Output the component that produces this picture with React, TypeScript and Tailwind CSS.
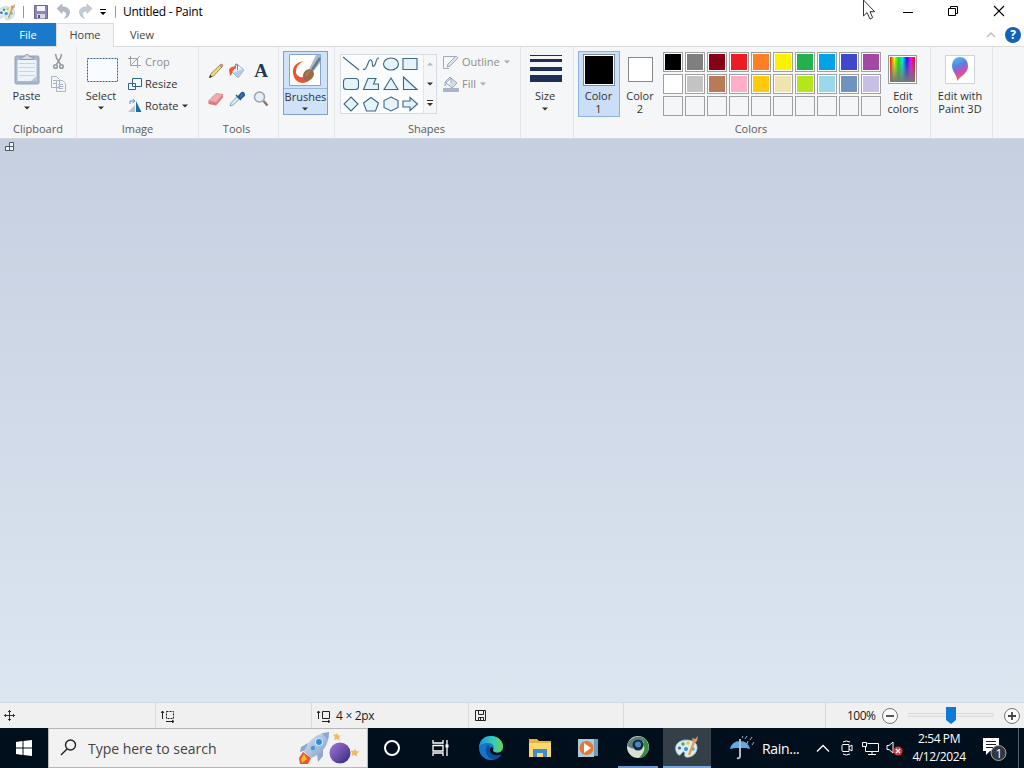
import type { ReactNode } from "react";
import clsx from "clsx";

const paletteRows = [
  ["#000000", "#7f7f7f", "#880015", "#ed1c24", "#ff7f27", "#fff200", "#22b14c", "#00a2e8", "#3f48cc", "#a349a4"],
  ["#ffffff", "#c3c3c3", "#b97a57", "#ffaec9", "#ffc90e", "#efe4b0", "#b5e61d", "#99d9ea", "#7092be", "#c8bfe7"],
  ["", "", "", "", "", "", "", "", "", ""],
];

const shapes = [
  "M2 3 18 16",
  "M2 15C6 18 7 4 10 6S10 14 13 12 14 4 18 4",
  "M2.500 10a7.500 6 0 1 0 15 0a7.500 6 0 1 0-15 0",
  "M3 4.500H17V15.500H3Z",
  "M5.500 4.500H14.500Q17.500 4.500 17.500 7.500V12.500Q17.500 15.500 14.500 15.500H5.500Q2.500 15.500 2.500 12.500V7.500Q2.500 4.500 5.500 4.500Z",
  "M7 4.500H15L12.500 10H17.500V15.500H2.500Z",
  "M10 4 17 15.500H3Z",
  "M3.500 3 17 15.500H3.500Z",
  "M10 3 17 10 10 17 3 10Z",
  "M10 3.500 17.500 9 14.500 17H5.500L2.500 9Z",
  "M10 3 17 6.500V13.500L10 17 3 13.500V6.500Z",
  "M3 7H10V3.500L17.500 10 10 16.500V13H3Z",
];

function Arrow({ className }: { className?: string }) {
  return (
    <svg width="6" height="4" viewBox="0 0 6 4" className={clsx("shrink-0", className)}>
      <path d="M0 .5H6L3 3.500Z" fill="currentColor" />
    </svg>
  );
}

function Group({ label, className, children }: { label?: string; className: string; children: ReactNode }) {
  return (
    <div className={clsx("flex h-[91px] shrink-0 flex-col border-r border-[#e2e5ea]", className)}>
      <div className="flex h-[75px] items-start">{children}</div>
      <div className="h-[14px] text-center leading-[14px] text-[#5a5a5a]">{label}</div>
    </div>
  );
}

function PaletteIcon({ size }: { size: number }) {
  return (
    <svg width={size} height={size} viewBox="0 0 24 24" className="shrink-0">
      <path d="M1 16C-1 10 4 5 11 5s12 3 11 9-7 9-11 8c-3-1 0-4-2-5s-3 4-5 3-2-2-3-4Z" fill="#dcebf2" stroke="#9fc0d0" strokeWidth=".8" />
      <circle cx="4.500" cy="13" r="1.600" fill="#3569a8" />
      <circle cx="8" cy="9" r="1.700" fill="#4aa564" />
      <circle cx="13" cy="8" r="1.700" fill="#edc23f" />
      <circle cx="11" cy="14" r="2" fill="#3b8fd0" />
      <circle cx="18" cy="14" r="1.700" fill="#58a4dc" />
      <path d="m14 20 5-13" stroke="#e2a13a" strokeWidth="2.200" />
      <path d="m18 8-1-5 3 1 3-3-1 5-2 2Z" fill="#d99a6a" />
    </svg>
  );
}

function Cursor() {
  return (
    <svg width="14" height="22" viewBox="0 0 14 22" className="absolute top-[-1px] left-[862px]">
      <path d="M1.500 1V17L5 13.600 8 20 10.700 18.700 8 12.700H12.700Z" fill="#fff" stroke="#333" />
    </svg>
  );
}

function TitleBar() {
  return (
    <div className="flex h-[23px] items-center bg-white pr-[19px] text-[12px] text-black">
      <div className="-ml-0.5 flex w-[23px]"><PaletteIcon size={18} /></div>
      <div className="ml-[2px] h-3 w-px bg-[#999]" />
      <svg width="14" height="14" viewBox="0 0 14 14" className="ml-[10px]">
        <path d="M.5.5H13.500V13.500H.5Z" fill="#8f86b4" stroke="#6f6498" />
        <path d="M3 1H11V6H3Z" fill="#f5f5fa" />
        <path d="M3 9H11V13.500H3Z" fill="#d8d5e6" />
        <path d="M4 10H6V13H4Z" fill="#62558d" />
      </svg>
      <svg width="15" height="15" viewBox="0 0 15 15" className="ml-[8px]">
        <path d="M1 4.500 6 0V3C11 2.500 14 5 13.500 9q-.5 4-5 5.500 2.500-3 2-5Q9.500 6.500 6 7V9.500Z" fill="#b4bac4" stroke="#a3aab6" strokeWidth=".6" />
      </svg>
      <svg width="15" height="15" viewBox="0 0 15 15" className="ml-[7px]">
        <path d="M14 4.500 9 0V3C4 2.500 1 5 1.500 9q.5 4 5 5.500-2.500-3-2-5Q5.500 6.500 9 7V9.500Z" fill="#c3cbd3" stroke="#aeb9c2" strokeWidth=".6" />
      </svg>
      <svg width="8" height="7" viewBox="0 0 8 7" className="mt-[2px] ml-[6px]">
        <path d="M1 0H7V1H1ZM1 3H7L4 6Z" />
      </svg>
      <div className="ml-[8px] h-3 w-px bg-[#999]" />
      <span className="ml-[7px] tracking-[-0.25px]">Untitled - Paint</span>
      <div className="ml-auto flex items-center">
        <svg width="12" height="12" viewBox="0 0 12 12"><path d="M1 6.500H11" stroke="#000" /></svg>
        <svg width="12" height="12" viewBox="0 0 12 12" fill="none" stroke="#000" className="-mt-px ml-[33px]">
          <path d="M1.500 3.500H8.500V10.500H1.500ZM3.500 3V1.500H10.500V8.500H9" />
        </svg>
        <svg width="12" height="12" viewBox="0 0 12 12" className="-mt-[2px] ml-[34px]"><path d="m1 1 10 10M11 1 1 11" stroke="#000" strokeWidth="1.100" /></svg>
      </div>
    </div>
  );
}

function Tabs() {
  return (
    <div className="flex h-6 items-stretch text-center leading-[23px] text-[#444]">
      <div className="w-14 border-b border-[#dadbdc] bg-[#1979ca] text-white">File</div>
      <div className="w-[58px] border-x border-t border-[#dadbdc] bg-[#f5f6f7] leading-[22px]">Home</div>
      <div className="w-[56px] border-b border-[#dadbdc]">View</div>
      <div className="flex flex-1 items-center justify-end gap-[9px] border-b border-[#dadbdc] pr-[3px]">
        <svg width="10" height="6" viewBox="0 0 10 6" fill="none"><path d="m1 5 4-4 4 4" stroke="#bbb" strokeWidth="1.300" /></svg>
        <div className="h-4 w-4 rounded-full bg-[#1163b8] text-[12px] font-bold leading-4 text-white">?</div>
      </div>
    </div>
  );
}

function ClipboardGroup() {
  return (
    <Group label="Clipboard" className="w-[77px]">
      <div className="flex w-[53px] flex-col items-center pt-[6px]">
        <svg width="26" height="32" viewBox="0 0 26 32">
          <rect x="1" y="3" width="24" height="28" rx="1.500" fill="#a9b7cd" stroke="#93a3bc" />
          <path d="M3.500 7H22.500V28H3.500Z" fill="#edf3fb" />
          <path d="M5 10.500H21M5 14.500H21M5 18.500H21M5 22.500H21" stroke="#c7d4e6" />
          <path d="M7 6.500V4H10Q13-1.500 16 4H19V6.500Z" fill="#d2d9e3" stroke="#8f9bad" />
          <path d="m17 28 5.500-5V28Z" fill="#b6c6dc" />
        </svg>
        <span className="mt-1 leading-[13px]">Paste</span>
        <Arrow className="mt-[4px]" />
      </div>
      <div className="flex flex-col pt-[6px]">
        <svg width="15" height="17" viewBox="0 0 15 17" className="-ml-[2px]" fill="none" stroke="#9098a3" strokeWidth="1.500">
          <path d="m4.500 1 1 4 4 6.500M10.500 1l-1 4-4 6.500" /><circle cx="4.500" cy="13.500" r="1.800" /><circle cx="10.500" cy="13.500" r="1.800" />
        </svg>
        <svg width="16" height="17" viewBox="0 0 16 17" className="-ml-[3px] mt-[6px]" fill="#f3f5fa" stroke="#a9b4c4">
          <path d="M1.500.5H6.500L9.500 3.500V11.500H1.500ZM6.500 4.500H12.500L15.500 7.500V15.500H6.500Z" />
          <path d="M3 4.500H6M3 7.500H6M8.500 8.500H13M8.500 10.500H13.500M8.500 12.500H13" />
        </svg>
      </div>
    </Group>
  );
}

function ImageGroup() {
  return (
    <Group label="Image" className="w-[122px]">
      <div className="flex w-[48px] flex-col items-center pt-[10px]">
        <svg width="31" height="26" viewBox="0 0 31 26" className="ml-[2px]">
          <path d="M.5 1.500H30.500V24.500H.5Z" fill="#f8fbff" stroke="#3a6188" strokeDasharray="2 1" />
        </svg>
        <span className="mt-[6px] leading-[13px]">Select</span>
        <Arrow className="mt-[4px]" />
      </div>
      <div className="flex flex-col pt-1 pl-[3px]">
        <div className="flex h-[22px] items-center gap-[3px] text-[#8d8d8d]">
          <svg width="14" height="14" viewBox="0 0 14 14" fill="none" stroke="#9ba3ad">
            <path d="M2.500 1V10.500H13M0 3.500H9.500V13M3.500 9.500 12 1" />
          </svg>
          Crop
        </div>
        <div className="flex h-[22px] items-center gap-[3px]">
          <svg width="14" height="14" viewBox="0 0 14 14" fill="#f5faff" stroke="#2a6299">
            <path d="M4.500 1.500H13.500V9.500H4.500ZM.5 6.500H7.500V12.500H.5Z" />
          </svg>
          Resize
        </div>
        <div className="flex h-[22px] items-center gap-[3px]">
          <svg width="14" height="14" viewBox="0 0 14 14">
            <path d="M8 2V13H13.500Z" fill="#1970a8" />
            <path d="M7 6V13H0Z" fill="#b8c3ca" />
            <path d="M2 5V2H6M4.500 0 7 2 4.500 4" fill="none" stroke="#4c92cd" />
          </svg>
          Rotate
          <Arrow />
        </div>
      </div>
    </Group>
  );
}

function ToolsGroup() {
  return (
    <Group label="Tools" className="w-20 pr-1">
      <div className="grid grid-cols-[22px_24px_24px] gap-y-2.5 pt-[15px] pl-1">
        <div className="flex h-[18px] items-center justify-center">
          <svg width="18" height="18" viewBox="0 0 18 18" className="ml-1">
            <path d="m2.500 15.500 1.500-4 9-8.500 2 2-8.500 9Z" fill="#f3dd6a" stroke="#7c7550" strokeWidth=".8" />
            <path d="m2 16 1.300-3L5 14.700Z" fill="#222" />
            <path d="m12.500 3.500 2 2 1.500-1.500q0-2-2-2Z" fill="#d99a92" stroke="#8d6d68" strokeWidth=".6" />
          </svg>
        </div>
        <div className="flex h-[18px] items-center justify-center">
          <svg width="18" height="18" viewBox="0 0 18 18">
            <path d="m9 2 7 6-6 8-6-6Z" fill="#eef4fa" stroke="#8ba3ba" strokeWidth=".9" />
            <path d="m9 9 6-2 1 1-6 8-5-5Z" fill="#b4cbe0" />
            <path d="M9.500 8V3q-1-2.500-2.500 0v3" fill="none" stroke="#6b7b8c" strokeWidth=".9" />
            <path d="M8 4.500Q2 4 1 8l1 6q2-1 2.500-5Q6 6 8 6.500Z" fill="#ee5a2c" />
          </svg>
        </div>
        <div className="text-center font-['Liberation_Serif',serif] text-[19px] font-bold leading-[18px] text-[#263850]">A</div>
        <div className="flex h-[18px] items-center justify-center">
          <svg width="18" height="18" viewBox="0 0 18 18" className="ml-1">
            <path d="M1.500 11 9 3.500 16 4.500 9 12.500Z" fill="#f3a9ad" stroke="#d5868a" strokeWidth=".8" />
            <path d="m1.500 11 7.500 1.500 7-8v3L9 15.500 1.500 14Z" fill="#df7b80" />
          </svg>
        </div>
        <div className="flex h-[18px] items-center justify-center">
          <svg width="18" height="18" viewBox="0 0 18 18">
            <path d="m2 16 .8-3L9 6.500l2.500 2.500L5 15.200Z" fill="#d3e8f4" stroke="#7595ad" strokeWidth=".8" />
            <path d="m8 5 5 5M10.500 6.500l2.500-3q2-2 3 0t-1 3l-2.500 2.500Z" fill="#2f75b8" stroke="#24598c" strokeWidth="1.500" />
          </svg>
        </div>
        <div className="flex h-[18px] items-center justify-center">
          <svg width="16" height="18" viewBox="0 0 16 18">
            <path d="m10.500 11 4 4.500" stroke="#8d7268" strokeWidth="2.500" />
            <circle cx="6.500" cy="7" r="5" fill="#e5f0f6" stroke="#9ba4ac" strokeWidth="1.500" />
          </svg>
        </div>
      </div>
    </Group>
  );
}

function BrushesGroup() {
  return (
    <Group className="w-14">
      <div className="mt-1 ml-1 flex h-[64px] w-[45px] flex-col items-center border border-[#7da2ce] bg-[#cfe2f7]">
        <div className="flex h-[37px] w-full shrink-0 justify-center border-b border-[#98b9df] pt-[2px]">
          <svg width="32" height="32" viewBox="0 0 32 32" className="-ml-px">
            <path d="M.5.5H31.500V31.500H.5Z" fill="#fff" stroke="#87a5c8" />
            <path d="M15 7Q3 9 4 19q1 9 9 10 6 0 8-4l-6-2q-6 1-8-4Q6 11 15 7Z" fill="#ea5630" />
            <path d="m20 15 7-14h4v8l-7 9Z" fill="#a9bcc6" />
            <path d="m23 16 8-12" stroke="#5f7b8c" strokeWidth="2.500" />
            <path d="M14 24q-1-7 6-9 5 1 5 5-1 6-7 7-3 0-4-3Z" fill="#9a6a4a" />
            <path d="M17 22q1-4 4-5" fill="none" stroke="#b98d6d" />
          </svg>
        </div>
        <span className="mt-px leading-[13px]">Brushes</span>
        <Arrow className="mt-[4px] -ml-px" />
      </div>
    </Group>
  );
}

function ShapesGroup() {
  return (
    <Group label="Shapes" className="w-[186px] pr-0.5">
      <div className="mt-[7px] ml-[5px] flex h-[60px] w-[97px] border border-[#d5dce5] bg-[#fbfcfd]">
        <div className="-mt-px grid w-[82px] grid-cols-[20px_20px_19px_20px] grid-rows-[20px_20px_20px]">
          {shapes.map((d, i) => (
            <svg key={d} width="20" height="20" viewBox="0 0 20 20">
              <path d={d} fill={i < 2 ? "none" : "#e4f3fc"} stroke="#3f6787" strokeWidth="1.100" />
            </svg>
          ))}
        </div>
        <div className="flex flex-1 flex-col items-center border-l border-[#e0e5eb] bg-[#f5f6f7]">
          <Arrow className="mt-[7px] rotate-180 text-[#b5b8bd]" />
          <Arrow className="mt-4 text-[#333]" />
          <svg width="8" height="7" viewBox="0 0 8 7" className="mt-[14px]"><path d="M1 0H7V1H1ZM1 3H7L4 6Z" fill="#333" /></svg>
        </div>
      </div>
      <div className="flex flex-col pt-1 pl-[6px] text-[#8d8d8d]">
        <div className="flex h-[22px] items-center gap-[3px]">
          <svg width="16" height="16" viewBox="0 0 16 16" fill="#dfe3e7" stroke="#a4abb4">
            <path d="M12 2.500H.5V14.500H6" fill="none" /><path d="m4 13 1-3 8-8 2 2-8 8Z" />
          </svg>
          Outline
          <Arrow className="ml-[1px] text-[#aaa]" />
        </div>
        <div className="flex h-[22px] items-center gap-[3px]">
          <svg width="16" height="16" viewBox="0 0 16 16" fill="#d8dee5" stroke="#9ca9b8">
            <path d="m8 2 6 5-5 5-6-5ZM8 7V2q-1-2-2 0L2 6v4" /><path d="M.5 12.500H15.500V15.500H.5Z" fill="#a8b5c9" stroke="#a8b5c9" />
          </svg>
          Fill
          <Arrow className="ml-[1px] text-[#aaa]" />
        </div>
      </div>
    </Group>
  );
}

function ColorsGroup() {
  return (
    <Group label="Colors" className="w-[357px] pr-[2px]">
      <div className="mt-1 ml-1 flex h-[66px] w-[42px] flex-col items-center border border-[#8db2e3] bg-[#cadff7] pt-[2px]">
        <div className="-ml-px h-8 w-8 border border-[#7d8b9c] bg-white p-px"><div className="h-full bg-black" /></div>
        <span className="-ml-px mt-[3px] w-9 text-center leading-[13px]">Color<br />1</span>
      </div>
      <div className="flex w-10 flex-col items-center pt-[10px]">
        <div className="h-[25px] w-[25px] border border-[#888] bg-white" />
        <span className="mt-[7px] w-9 text-center leading-[13px]">Color<br />2</span>
      </div>
      <div className="ml-[3px] grid grid-cols-10 gap-[2px] pt-[5px]">
        {paletteRows.flat().map((color, i) => (
          <div key={i} className={clsx("h-5 w-5 border border-[#a0a0a0] p-px", color && "bg-white")}>
            <div className="h-full" style={{ backgroundColor: color || "#f5f6f7" }} />
          </div>
        ))}
      </div>
      <div className="flex w-11 flex-col items-center pt-2">
        <div className="-ml-px h-[29px] w-[29px] border border-[#999] bg-white p-px">
          <div className="h-full bg-[linear-gradient(to_bottom,transparent,#777),linear-gradient(to_right,#f00,#ff0,#0e0,#0ee,#11f,#f0f,#f00)]" />
        </div>
        <span className="mt-[5px] text-center leading-[13px]">Edit<br />colors</span>
      </div>
    </Group>
  );
}

function Ribbon() {
  return (
    <div className="flex h-[91px] bg-[#f5f6f7]">
      <ClipboardGroup />
      <ImageGroup />
      <ToolsGroup />
      <BrushesGroup />
      <ShapesGroup />
      <Group className="w-[53px]">
        <div className="flex w-12 flex-col items-center pt-2">
          <svg width="32" height="29" viewBox="0 0 32 29" className="ml-[2px]" fill="#1f3058">
            <path d="M0 0H32V1H0ZM0 4H32V7H0ZM0 12H32V16H0ZM0 20H32V27H0Z" />
          </svg>
          <span className="mt-[5px] leading-[13px]">Size</span>
          <Arrow className="mt-[5px]" />
        </div>
      </Group>
      <ColorsGroup />
      <Group className="w-[62px]">
        <div className="flex w-[58px] flex-col items-center pt-2">
          <svg width="30" height="29" viewBox="0 0 30 29">
            <defs>
              <linearGradient id="drop" x1=".2" y1="0" x2=".5" y2="1">
                <stop offset="0" stopColor="#42c7ee" /><stop offset=".4" stopColor="#6679dd" />
                <stop offset=".7" stopColor="#d44bac" /><stop offset="1" stopColor="#f57937" />
              </linearGradient>
            </defs>
            <path d="M.5.5H29.500V28.500H.5Z" fill="#fff" stroke="#d0d4d9" />
            <path d="M12 26C13 21 7 17 7 11c0-12 16-12 16 0 0 7-6 9-11 15Z" fill="url(#drop)" />
          </svg>
          <span className="mt-[5px] whitespace-nowrap text-center leading-[13px]">Edit with<br />Paint 3D</span>
        </div>
      </Group>
    </div>
  );
}

function StatusBar() {
  return (
    <div className="flex h-[26px] items-stretch border-t border-[#d0dae4] bg-[#f0f0f0] text-[12px] text-[#1a1a1a]">
      <div className="flex w-[156px] items-center border-r border-[#d9d9d9] pl-1">
        <svg width="11" height="11" viewBox="0 0 11 11" fill="none" stroke="#333">
          <path d="M5.500 0V11M0 5.500H11M4 2l1.500-1.500L7 2M4 9l1.500 1.500L7 9M2 4 .5 5.500 2 7M9 4l1.500 1.500L9 7" />
        </svg>
      </div>
      <div className="flex w-[156px] items-center border-r border-[#d9d9d9] pl-[5px]">
        <svg width="14" height="14" viewBox="0 0 14 14" fill="none" stroke="#222">
          <path d="M5.500 2.500H12.500V9.500H5.500Z" strokeDasharray="2 1" />
          <path d="M1.500 10V2M0 4l1.500-2L3 4M5 12.500H13M11 11l2 1.500L11 14" />
        </svg>
      </div>
      <div className="flex w-[157px] items-center border-r border-[#d9d9d9] pl-[5px]">
        <svg width="14" height="14" viewBox="0 0 14 14" fill="none" stroke="#222">
          <path d="M5.500 2.500H12.500V9.500H5.500ZM1.500 10V2M0 4l1.500-2L3 4M5 12.500H13M11 11l2 1.500L11 14" />
        </svg>
        <span className="ml-[5px] tracking-[-0.3px]">4 × 2px</span>
      </div>
      <div className="flex w-[155px] items-center border-r border-[#d9d9d9] pl-[6px]">
        <svg width="11" height="11" viewBox="0 0 11 11" fill="none" stroke="#222">
          <path d="M.5.5H10.500V10.500H.5ZM3.500 1V4.500H8.500V1M3.500 10V7.500H8.500V10M5.500 8V10" />
        </svg>
      </div>
      <div className="w-[202px] border-r border-[#d9d9d9]" />
      <div className="flex flex-1 items-center pl-[21px]">
        <span className="w-[34px] tracking-[-0.5px]">100%</span>
        <svg width="18" height="18" viewBox="0 0 18 18" fill="#fafafa" stroke="#777">
          <circle cx="9" cy="9" r="7.500" /><path d="M5 9H13" stroke="#444" strokeWidth="1.800" />
        </svg>
        <svg width="86" height="18" viewBox="0 0 86 18" className="ml-[9px]">
          <path d="M0 6.500H85V9.500H0Z" fill="#eee" stroke="#dadada" />
          <path d="M38 0H48V13L43 17 38 13Z" fill="#1079d5" />
        </svg>
        <svg width="18" height="18" viewBox="0 0 18 18" className="ml-[9px] shrink-0" fill="#fafafa" stroke="#777">
          <circle cx="9" cy="9" r="7.500" /><path d="M5 9H13M9 5V13" stroke="#444" strokeWidth="1.800" />
        </svg>
      </div>
    </div>
  );
}

function SearchArt() {
  return (
    <svg width="62" height="36" viewBox="0 0 62 36">
      <defs>
        <linearGradient id="planet" x1="0" y1="0" x2="1" y2="1"><stop stopColor="#a677dc" /><stop offset="1" stopColor="#302879" /></linearGradient>
        <linearGradient id="rocket" x1="0" y1="0" x2="1" y2="1"><stop stopColor="#d6e7f7" /><stop offset="1" stopColor="#7f9cc5" /></linearGradient>
      </defs>
      <path d="m5 22-4 6 1 6 8 0 3-6Z" fill="#e9562b" /><path d="m6 24-3 5 1 4 5-4Z" fill="#ffb52f" />
      <path d="M10 13 3 17l-1 5 7-2ZM19 24l1 8 5-6 0-9Z" fill="#93a8c8" />
      <path d="M6 22Q12 4 31 2q0 19-18 26Z" fill="url(#rocket)" />
      <path d="M24 3.500 31 2l-1 8Z" fill="#8aa8d4" />
      <circle cx="21" cy="12" r="3.500" fill="#328de0" stroke="#c8e4fa" strokeWidth="1.200" />
      <circle cx="15" cy="18" r="2.200" fill="#4696dc" />
      <circle cx="42" cy="23" r="10.500" fill="url(#planet)" />
      <path d="m39 3 1 2.500 3 0-2 2 1 3-3-1.500-3 1 1-3-2-2.500h3ZM57 18.500l1 2.500 3.500.5-2.500 2v3l-2.500-1.500-3 1 .5-3-1.500-2.500 3 .5Z" fill="#efb968" />
    </svg>
  );
}

function Taskbar() {
  return (
    <div className="flex h-10 items-stretch bg-[#010e1b] text-white">
      <div className="flex w-12 items-center justify-center">
        <svg width="16" height="16" viewBox="0 0 16 16" fill="#fff">
          <path d="m0 2 6.500-1V7.500H0ZM7.500 1 16 0V7.500H7.500ZM0 8.500H6.500V15L0 14ZM7.500 8.500H16V16L7.500 15Z" />
        </svg>
      </div>
      <div className="flex w-80 items-center border border-[#b6b6b6] bg-[#f2f2f2] pl-[11px] text-[#444]">
        <svg width="18" height="18" viewBox="0 0 18 18" fill="none" stroke="#222" strokeWidth="1.400">
          <circle cx="10.500" cy="6" r="5" /><path d="m7 10-6 6" />
        </svg>
        <span className="ml-[10px] text-[14px] tracking-[-0.02px]">Type here to search</span>
        <div className="ml-auto pr-[7px]"><SearchArt /></div>
      </div>
      <div className="flex w-12 items-center justify-center">
        <div className="h-4 w-4 rounded-full border-2 border-white" />
      </div>
      <div className="flex w-12 items-center justify-center">
        <svg width="17" height="16" viewBox="0 0 17 16" fill="none" stroke="#fff" strokeWidth="1.300">
          <path d="M1 0V3H11V0M1 5.500H11V11H1ZM1 16V13H11V16M15 0V16" /><path d="M13.500 4.500H16.500V7.500H13.500Z" fill="#fff" stroke="none" />
        </svg>
      </div>
      <div className="flex w-[54px] items-center justify-center">
        <svg width="24" height="24" viewBox="0 0 24 24">
          <defs>
            <linearGradient id="edgeTop"><stop stopColor="#1994dc" /><stop offset=".6" stopColor="#39c9bc" /><stop offset="1" stopColor="#68d547" /></linearGradient>
          </defs>
          <circle cx="12" cy="12" r="12" fill="#1476c9" />
          <path d="M0 11C1 3 6 0 12 0c8 0 12 6 12 10 0 7-7 8-10 5 2-5 0-8-5-8-5 0-8 2-9 4Z" fill="url(#edgeTop)" />
          <path d="M9 9c-5 5-1 15 6 14 4 0 7-3 8-5-5 3-12 1-12-4 0-2 1-4-2-5Z" fill="#0d4e9c" />
          <path d="M14 15c3 3 9 2 10-2l-1 5c-5 3-12 1-12-4 0-2 1-3 2-3 2 1 1 3 1 4Z" fill="#010e1b" />
        </svg>
      </div>
      <div className="flex w-11 items-center justify-center">
        <svg width="22" height="20" viewBox="0 0 22 20">
          <path d="M0 1H8L10 3H22V19H0Z" fill="#e9b43c" /><path d="M0 5H22V19H0Z" fill="#fbd86d" />
          <path d="M4 11H18V19H14V15H8V19H4Z" fill="#3d8fcb" />
        </svg>
      </div>
      <div className="flex w-[52px] items-center justify-center">
        <svg width="20" height="20" viewBox="0 0 20 20">
          <path d="M4 1H20V18H4Z" fill="#679fba" /><path d="M0 1H16V19H0Z" fill="#a7cedd" />
          <circle cx="8.500" cy="10" r="7" fill="#e97635" /><path d="m6 5 7 5-7 5Z" fill="#fff" />
        </svg>
      </div>
      <div className="ml-1 flex w-10 flex-col items-center border-b-2 border-[#6795ce] pt-2">
        <svg width="22" height="22" viewBox="0 0 22 22">
          <circle cx="11" cy="11" r="11" fill="#d9dfd2" />
          <path d="M0 10C1 2 14-4 20 5L11 7Q5 7 6 13Z" fill="#607f78" />
          <path d="M18 3c8 8 2 19-6 19 5-5 7-9 4-14Z" fill="#358b41" />
          <circle cx="11" cy="9" r="5.500" fill="#152d40" /><circle cx="11" cy="8.500" r="3" fill="#4a86bd" />
        </svg>
      </div>
      <div className="ml-[5px] flex w-12 items-center justify-center border-b-2 border-[#76a5dc] bg-[#353f48]">
        <PaletteIcon size={24} />
      </div>
      <div className="flex w-[112px] items-center pl-[19px]">
        <svg width="25" height="26" viewBox="0 0 25 26" fill="none">
          <path d="M0 14Q2 6 10 6q8 0 10 8l-4-1-6 0-5 0Z" fill="#61a9e7" />
          <path d="M10 4V21q0 3-3 2" stroke="#aebdcc" strokeWidth="2" />
          <path d="m13 1-1 2M17 1l-2 3M22 2l-2 3M18 6l-1 3M24 7l-2 3" stroke="#8aafd0" />
        </svg>
        <span className="ml-[7px] text-[14px] tracking-[-0.3px]">Rain...</span>
      </div>
      <div className="flex w-[84px] items-center">
        <svg width="14" height="9" viewBox="0 0 14 9" fill="none" stroke="#fff" strokeWidth="1.300" className="-ml-[7px] shrink-0"><path d="m1 7.500 6-6 6 6" /></svg>
        <svg width="12" height="16" viewBox="0 0 12 16" fill="none" stroke="#fff" className="ml-[11px] shrink-0">
          <path d="M1 5.500Q1 4.500 2 4.500H8V11.500H2Q1 11.500 1 10.500ZM8 7l3-2v6L8 9M2 2q3-2 7 0M2 14q3 2 7 0" />
        </svg>
        <svg width="17" height="15" viewBox="0 0 17 15" fill="none" stroke="#fff" className="ml-[9px] shrink-0">
          <path d="M5.500 2.500H16.500V10.500H3.500V6M10 11V13.500M6 13.500H14M.5 1.500H4.500V5.500H.5Z" />
        </svg>
        <svg width="17" height="16" viewBox="0 0 17 16" className="ml-[7px] shrink-0">
          <path d="M1 5.500H3L7 2V13L3 9.500H1Z" fill="none" stroke="#fff" />
          <circle cx="12" cy="11" r="4.500" fill="#d93440" /><path d="m10 9 4 4M14 9l-4 4" stroke="#fff" strokeWidth="1.300" />
        </svg>
      </div>
      <div className="flex w-[64px] flex-col items-center justify-center whitespace-nowrap text-[12px] leading-[18px] tracking-[-0.4px]">
        <span>2:54 PM</span>
        <span>4/12/2024</span>
      </div>
      <div className="flex w-12 items-center justify-center border-r border-[#52616e]">
        <svg width="26" height="26" viewBox="0 0 26 26">
          <path d="M1 3H17V16H8L4 20V16H1Z" fill="#fff" />
          <path d="M4 6.500H14M4 9.500H14M4 12.500H11" stroke="#15202b" />
          <circle cx="16.500" cy="18" r="7.500" fill="#303840" stroke="#aaa" />
          <text x="13.500" y="22.500" fill="#fff" fontSize="12">1</text>
        </svg>
      </div>
    </div>
  );
}

export default function App() {
  return (
    <div className="relative flex h-[768px] w-[1024px] flex-col overflow-hidden bg-white font-['Open_Sans','Noto_Sans',sans-serif] text-[11px] text-[#333]">
      <TitleBar />
      <Tabs />
      <Ribbon />
      <div className="flex-1 border-t border-[#d0d6e2] bg-linear-to-b from-[#c6cfe0] to-[#dce6f1] pt-[3px] pl-1">
        <svg width="11" height="11" viewBox="0 0 11 11" fill="#f4f7fa" stroke="#4e5965">
          <path d="M1.500 4.500H5.500V8.500H1.500ZM5.500 4.500H9.500V8.500H5.500ZM5.500.5H9.500V4.500H5.500Z" />
        </svg>
      </div>
      <StatusBar />
      <Taskbar />
      <Cursor />
    </div>
  );
}
